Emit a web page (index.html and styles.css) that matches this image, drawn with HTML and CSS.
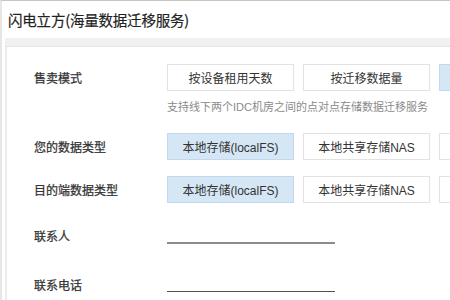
FILE: index.html
```html
<!DOCTYPE html>
<html lang="zh-CN">
<head>
<meta charset="utf-8">
<title>闪电立方</title>
<link rel="stylesheet" href="styles.css">
</head>
<body>
<div class="page">
  <div class="title">闪电立方(海量数据迁移服务)</div>
  <div class="band"></div>
  <div class="panel">
    <div class="row row-sale">
      <div class="label">售卖模式</div>
      <div class="group">
        <div class="opt">按设备租用天数</div>
        <div class="opt">按迁移数据量</div>
        <div class="opt sel"></div>
      </div>
    </div>
    <div class="help">支持线下两个IDC机房之间的点对点存储数据迁移服务</div>
    <div class="row row-src">
      <div class="label">您的数据类型</div>
      <div class="group">
        <div class="opt sel">本地存储(localFS)</div>
        <div class="opt">本地共享存储NAS</div>
        <div class="opt"></div>
      </div>
    </div>
    <div class="row row-dst">
      <div class="label">目的端数据类型</div>
      <div class="group">
        <div class="opt sel">本地存储(localFS)</div>
        <div class="opt">本地共享存储NAS</div>
        <div class="opt"></div>
      </div>
    </div>
    <div class="row row-contact">
      <div class="label">联系人</div>
      <div class="field thick"></div>
    </div>
    <div class="row row-phone">
      <div class="label">联系电话</div>
      <div class="field thin"></div>
    </div>
  </div>
</div>
</body>
</html>
```

FILE: styles.css
```css
html, body {
  margin: 0;
  padding: 0;
  background: #ffffff;
}

body {
  width: 450px;
  height: 300px;
  overflow: hidden;
  font-family: "Liberation Sans", "Noto Sans CJK SC", sans-serif;
  color: #333333;
}

.page {
  height: 300px;
  border-top: 1px solid #c6c6c6;
  border-left: 2px solid #e6e6e6;
  overflow: hidden;
  box-sizing: border-box;
}

.title {
  height: 37px;
  padding-left: 6px;
  display: flex;
  align-items: center;
  font-family: "Noto Sans CJK SC", sans-serif;
  font-size: 14.5px;
  letter-spacing: -0.2px;
  color: #222222;
  -webkit-text-stroke: 0.2px #222222;
}

.band {
  height: 9px;
  margin-left: 3px;
  background: #f1f1f1;
  border-bottom: 1px solid #e6e6e6;
  box-sizing: border-box;
}

.panel {
  margin-left: 3px;
  border-left: 2px solid #ececec;
  padding-top: 17px;
  padding-left: 27px;
  height: 260px;
}

.row {
  display: flex;
  align-items: center;
}

.label {
  width: 133px;
  flex-shrink: 0;
  font-size: 12px;
  color: #333333;
  -webkit-text-stroke: 0.25px #333333;
}

.group {
  display: flex;
  gap: 9px;
  flex-shrink: 0;
}

.opt {
  width: 127px;
  height: 27px;
  box-sizing: border-box;
  border: 1px solid #e2e2e2;
  background: #ffffff;
  display: flex;
  align-items: center;
  justify-content: center;
  font-size: 12px;
  color: #333333;
  flex-shrink: 0;
}

.opt.sel {
  background: #d5e6f5;
  border-color: #c3d8ec;
}

.help {
  margin-top: 8px;
  margin-left: 133px;
  line-height: 16px;
  font-size: 11px;
  color: #8a8a8a;
  white-space: nowrap;
}

.row-src { margin-top: 18px; }
.row-dst { margin-top: 16px; }
.row-contact { margin-top: 24px; height: 17px; }
.row-phone { margin-top: 32px; height: 16px; }

.field {
  width: 168px;
  box-sizing: border-box;
}

.field.thick {
  height: 17px;
  border-bottom: 2px solid #8c8c8c;
}

.field.thin {
  height: 16px;
  border-bottom: 1px solid #555555;
}
```
